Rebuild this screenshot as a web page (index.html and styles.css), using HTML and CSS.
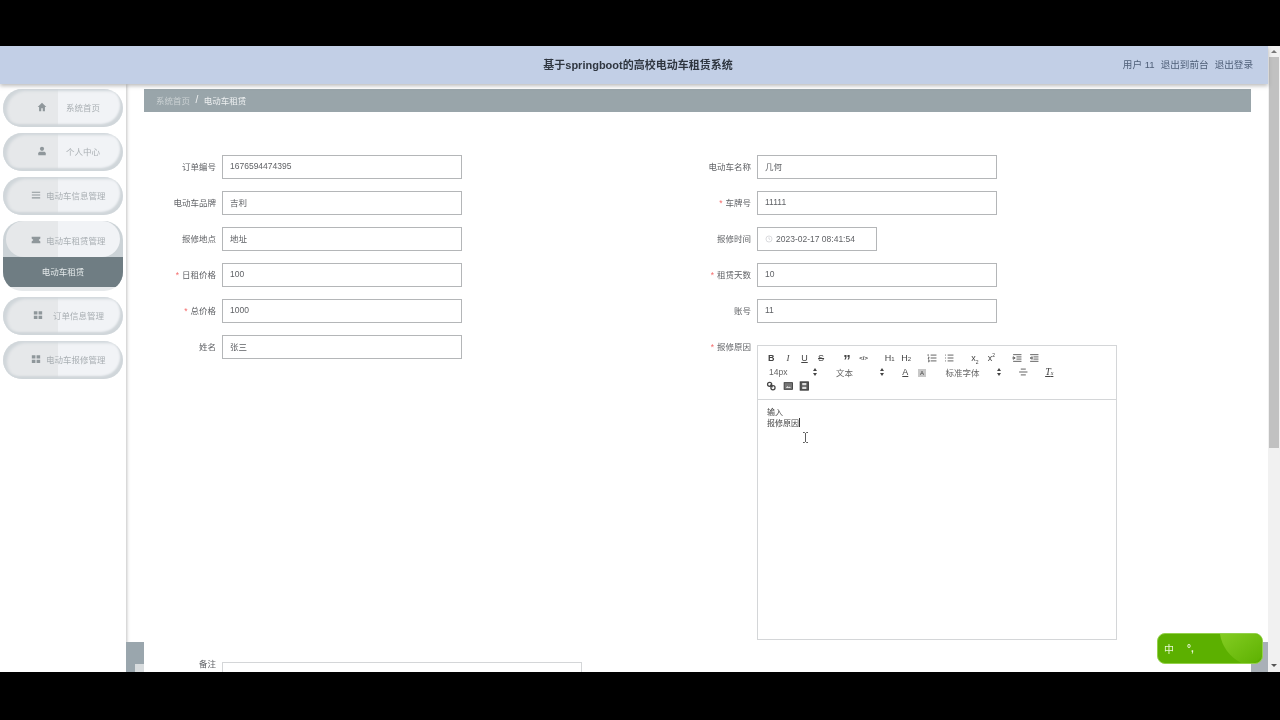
FILE: index.html
```html
<!DOCTYPE html>
<html lang="zh-CN">
<head>
  <meta charset="UTF-8">
  <meta name="viewport" content="width=device-width, initial-scale=1.0">
  <title>基于springboot的高校电动车租赁系统</title>
  <link rel="stylesheet" href="styles.css">
</head>
<body>
  <div class="screen">
    <div class="page">
      <header class="topbar">
        <div class="title">基于springboot的高校电动车租赁系统</div>
        <div class="user-links">
          <span>用户 11</span>
          <a>退出到前台</a>
          <a>退出登录</a>
        </div>
      </header>

      <div class="layout">
        <aside class="sidebar">
          <div class="pill pill-short">
            <svg class="nav-icon" viewBox="0 0 12 12"><path d="M6 1 .8 6h1.7v5h2.6V7.6h1.8V11h2.600V6h1.700z"/></svg>
            <span>系统首页</span>
          </div>
          <div class="pill pill-short">
            <svg class="nav-icon" viewBox="0 0 12 12"><circle cx="6" cy="3.400" r="2.500"/><path d="M1.500 11V8.800C1.500 7.500 2.500 6.800 3.800 6.800h4.400c1.300 0 2.300.7 2.300 2V11z"/></svg>
            <span>个人中心</span>
          </div>
          <div class="pill pill-wide">
            <svg class="nav-icon" viewBox="0 0 12 12"><path d="M1 2h10v1.300H1zM1 5.400h10v1.300H1zM1 8.800h10v1.300H1z"/></svg>
            <span>电动车信息管理</span>
          </div>
          <div class="pill-open">
            <div class="pill pill-wide pill-head">
              <svg class="nav-icon" viewBox="0 0 12 12"><path d="M.8 2h10.400v2.200l-2 1.800 2 1.800V10H.8V7.800l2-1.800-2-1.800z"/></svg>
              <span>电动车租赁管理</span>
            </div>
            <div class="submenu">电动车租赁</div>
          </div>
          <div class="pill pill-mid">
            <svg class="nav-icon" viewBox="0 0 12 12"><path d="M1 1.500h4.300v4H1zM6.700 1.500H11v4H6.700zM1 6.800h4.300v4H1zM6.700 6.800H11v4H6.700z"/></svg>
            <span>订单信息管理</span>
          </div>
          <div class="pill pill-wide">
            <svg class="nav-icon" viewBox="0 0 12 12"><path d="M1 1.500h4.300v4H1zM6.700 1.500H11v4H6.700zM1 6.800h4.300v4H1zM6.700 6.800H11v4H6.700z"/></svg>
            <span>电动车报修管理</span>
          </div>
        </aside>

        <main class="content">
          <div class="breadcrumb">
            <span class="crumb-home">系统首页</span>
            <span class="crumb-sep">/</span>
            <span class="crumb-now">电动车租赁</span>
          </div>

          <form class="form-grid">
            <div class="field"><label>订单编号</label><input class="text-input" value="1676594474395"></div>
            <div class="field"><label>电动车名称</label><input class="text-input" value="几何"></div>
            <div class="field"><label>电动车品牌</label><input class="text-input" value="吉利"></div>
            <div class="field"><label><i>*</i>车牌号</label><input class="text-input" value="11111"></div>
            <div class="field"><label>报修地点</label><input class="text-input" value="地址"></div>
            <div class="field">
              <label>报修时间</label>
              <div class="date-input">
                <svg class="clock" viewBox="0 0 10 10"><circle cx="5" cy="5" r="3.800"/><path d="M5 2.800V5l1.500.9"/></svg>
                <span>2023-02-17 08:41:54</span>
              </div>
            </div>
            <div class="field"><label><i>*</i>日租价格</label><input class="text-input" value="100"></div>
            <div class="field"><label><i>*</i>租赁天数</label><input class="text-input" value="10"></div>
            <div class="field"><label><i>*</i>总价格</label><input class="text-input" value="1000"></div>
            <div class="field"><label>账号</label><input class="text-input" value="11"></div>
            <div class="field"><label>姓名</label><input class="text-input" value="张三"></div>
            <div class="field">
              <label><i>*</i>报修原因</label>
              <div class="editor">
                <div class="toolbar">
                  <span class="group">
                    <b class="tool">B</b><em class="tool tool-i">I</em><u class="tool">U</u><s class="tool">S</s>
                  </span>
                  <span class="group">
                    <span class="tool tool-quote">”</span><span class="tool tool-code">&lt;/&gt;</span>
                  </span>
                  <span class="group">
                    <span class="tool tool-h">H<small>1</small></span><span class="tool tool-h">H<small>2</small></span>
                  </span>
                  <span class="group">
                    <svg class="tool-svg" viewBox="0 0 12 12"><path d="M4 2.500h7M4 6h7M4 9.500h7M1 1.500v2M1 5h1.200L1 7h1.200M1 8.500h1.200v2H1"/></svg>
                    <svg class="tool-svg" viewBox="0 0 12 12"><path d="M4 2.500h7M4 6h7M4 9.500h7M1 2.500h1M1 6h1M1 9.500h1"/></svg>
                  </span>
                  <span class="group">
                    <span class="tool tool-h">x<sub>2</sub></span><span class="tool tool-h">x<sup>2</sup></span>
                  </span>
                  <span class="group">
                    <svg class="tool-svg" viewBox="0 0 12 12"><path d="M1 2h10M5 4.700h6M5 7.300h6M1 10h10M1 4.500 3.500 6 1 7.500z"/></svg>
                    <svg class="tool-svg" viewBox="0 0 12 12"><path d="M1 2h10M5 4.700h6M5 7.300h6M1 10h10M3.500 4.500 1 6l2.500 1.500z"/></svg>
                  </span>
                  <span class="group picker picker-size">14px</span>
                  <span class="group picker picker-size">文本</span>
                  <span class="group">
                    <span class="tool tool-color">A</span><span class="tool tool-bg"><span>A</span></span>
                  </span>
                  <span class="group picker picker-font">标准字体</span>
                  <span class="group">
                    <svg class="tool-svg" viewBox="0 0 12 12"><path d="M3 2.500h6M1 6h10M3 9.500h6"/></svg>
                  </span>
                  <span class="group">
                    <span class="tool tool-clean">T<small>x</small></span>
                  </span>
                  <span class="group group-break">
                    <svg class="tool-svg tool-link" viewBox="0 0 12 12"><circle cx="4" cy="4" r="2.500"/><circle cx="8" cy="8" r="2.500"/><path d="M4.500 4.500l3 3"/></svg>
                    <svg class="tool-svg tool-image" viewBox="0 0 12 12"><rect x="1" y="2" width="10" height="8"/><path class="cut" d="M3 8.500 5 6l1.500 1.500L8 6.500l1 2z"/></svg>
                    <svg class="tool-svg tool-video" viewBox="0 0 12 12"><rect x="1" y="1" width="10" height="10"/><path class="cut" d="M3.500 2.500h5V5h-5zM3.500 7h5v2.500h-5z"/></svg>
                  </span>
                </div>
                <div class="editor-body">
                  <p>输入</p>
                  <p>报修原因<span class="caret"></span></p>
                  <svg class="ibeam" viewBox="0 0 7 11"><path d="M1 .5h1.500l1 1 1-1H6M1 10.500h1.500l1-1 1 1H6M3.500 1.500v8"/></svg>
                </div>
              </div>
            </div>
            <div class="field field-full">
              <label>备注</label>
              <div class="editor editor-short">
                <div class="toolbar">
                  <span class="group">
                    <b class="tool">B</b><em class="tool tool-i">I</em><u class="tool">U</u><s class="tool">S</s>
                  </span>
                  <span class="group">
                    <span class="tool tool-quote">”</span><span class="tool tool-code">&lt;/&gt;</span>
                  </span>
                  <span class="group">
                    <span class="tool tool-h">H<small>1</small></span><span class="tool tool-h">H<small>2</small></span>
                  </span>
                </div>
              </div>
            </div>
          </form>

          <div class="corner-block"></div>
          <div class="corner-block-right"></div>
        </main>
      </div>

      <div class="ime">
        <span class="ime-zh">中</span>
        <span class="ime-punct">°,</span>
        <svg class="ime-leaf" viewBox="0 0 60 31">
          <defs>
            <linearGradient id="leaf" x1="0" y1="0" x2="1" y2="1">
              <stop offset="0" stop-color="#84cc22"/>
              <stop offset="1" stop-color="#5cb000"/>
            </linearGradient>
          </defs>
          <path fill="url(#leaf)" d="M18 0h38a4 4 0 0 1 4 4v18c-5 6-9 8-16 9C30 26 20 14 18 0z"/>
        </svg>
      </div>

      <div class="scrollbar">
        <span class="arrow-up"></span>
        <div class="thumb"></div>
        <span class="arrow-down"></span>
      </div>
    </div>
  </div>
</body>
</html>
```

FILE: styles.css
```css
* {
  box-sizing: border-box;
}
html, body {
  height: 100%;
  margin: 0;
  overflow: hidden;
  background: #000;
}
body {
  font-family: "Liberation Sans", "Noto Sans CJK SC", sans-serif;
  font-size: 8.5px;
  color: #606266;
}
.screen {
  padding-top: 46px;
  height: 720px;
}
.page {
  position: relative;
  height: 626px;
  overflow: hidden;
  background: #fff;
  filter: blur(0.5px);
}

/* top bar */
.topbar {
  position: relative;
  z-index: 2;
  width: 1268px;
  height: 38px;
  padding: 0 15px 2px 0;
  display: flex;
  align-items: center;
  justify-content: flex-end;
  background: #c2cfe6;
  box-shadow: 0 2px 4px rgba(90, 90, 90, 0.4);
}
.title {
  position: absolute;
  left: 0;
  right: 0;
  text-align: center;
  font-size: 11px;
  font-weight: bold;
  color: #2f3640;
  text-indent: 8px;
}
.user-links {
  position: relative;
  display: flex;
  gap: 6px;
  font-size: 9.6px;
  color: #4f5f78;
}

/* sidebar */
.layout {
  display: flex;
  height: 588px;
  width: 1268px;
}
.sidebar {
  width: 126px;
  flex: none;
  padding: 5px 3px 0;
  background: #fff;
  box-shadow: 1px 0 3px rgba(120, 120, 120, 0.45);
}
.pill {
  width: 120px;
  height: 38px;
  margin-bottom: 6px;
  padding-bottom: 2px;
  display: flex;
  align-items: center;
  border-radius: 19px;
  color: #a9afb3;
  font-size: 8.5px;
  background: linear-gradient(90deg, #e6e8ea 0, #e6e8ea 46%, #f1f3f6 46%, #f1f3f6 100%);
  box-shadow: inset 4px 2px 3px #d0d6da, inset -3px -3px 2px #d0d6da;
}
.pill-short {
  padding-left: 34px;
}
.pill-short .nav-icon {
  margin-right: 19px;
}
.pill-wide {
  padding-left: 28px;
}
.pill-wide .nav-icon {
  margin-right: 5px;
}
.pill-mid {
  padding-left: 30px;
}
.pill-mid .nav-icon {
  margin-right: 10px;
}
.nav-icon {
  width: 10px;
  height: 10px;
  flex: none;
  fill: #8f979b;
}
.pill-open {
  width: 120px;
  height: 70px;
  margin: 1px 0 6px;
  border-radius: 19px;
  background: linear-gradient(#ccd3d7 0, #ccd3d7 66px, #e6e9eb 66px);
  overflow: hidden;
}
.pill-head {
  width: 114px;
  margin: 0 3px;
  height: 36px;
  padding: 1px 0 0 25px;
  border-radius: 18px;
  box-shadow: none;
}
.submenu {
  height: 30px;
  line-height: 30px;
  text-align: center;
  color: #e4e9ea;
  background: #6f7d83;
}

/* main area */
.content {
  position: relative;
  flex: 1;
  padding: 5px 17px 0 18px;
  overflow: hidden;
}
.breadcrumb {
  height: 23px;
  padding: 0 0 2px 12px;
  display: flex;
  align-items: center;
  background: #99a5aa;
  font-size: 8.5px;
}
.crumb-home {
  color: #cbd1d3;
}
.crumb-sep {
  margin: 0 5.500px;
  font-size: 10px;
  color: #eef0f1;
}
.crumb-now {
  color: #eef0f1;
}
.form-grid {
  display: grid;
  grid-template-columns: 535px 1fr;
  row-gap: 12px;
  padding-top: 43px;
}
.field {
  display: flex;
  align-items: flex-start;
}
.field-full {
  grid-column: 1 / 3;
}
.field label {
  width: 72px;
  height: 24px;
  line-height: 24px;
  margin-right: 6px;
  text-align: right;
  flex: none;
  color: #606266;
}
.field label i {
  margin-right: 3px;
  font-style: normal;
  color: #f56c6c;
}
.text-input, .date-input {
  height: 24px;
  border: 1px solid #b4b6b8;
  background: #fff;
  font-family: inherit;
  font-size: 8.5px;
  color: #606266;
}
.text-input {
  width: 240px;
  padding: 0 7px 2px;
  outline: none;
}
.date-input {
  width: 120px;
  display: flex;
  align-items: center;
  padding-left: 7px;
}
.clock {
  width: 8px;
  height: 8px;
  margin-right: 3px;
  fill: none;
  stroke: #c6c8cc;
  stroke-width: 0.8;
}

/* rich text editor */
.editor {
  width: 360px;
  height: 295px;
  margin-top: 10px;
  border: 1px solid #d4d6d8;
  background: #fff;
}
.editor-short {
  height: 60px;
}
.toolbar {
  height: 54px;
  padding: 5px 5px 0;
  display: flex;
  flex-wrap: wrap;
  align-content: flex-start;
  border-bottom: 1px solid #d4d6d8;
  color: #444;
}
.group {
  display: flex;
  height: 14px;
  align-items: center;
  margin-right: 9.4px;
}
.group-break {
  margin-right: 100px;
}
.tool, .tool-svg {
  width: 16.6px;
  height: 14px;
  flex: none;
}
.tool {
  display: block;
  line-height: 14px;
  text-align: center;
  font-size: 9px;
  font-style: normal;
  color: #444;
}
.tool-i {
  font-style: italic;
  font-family: "Liberation Serif", serif;
}
.tool-quote {
  font-size: 15px;
  font-weight: bold;
  line-height: 18px;
}
.tool-code {
  font-size: 6px;
  font-weight: bold;
}
.tool-h {
  font-size: 9px;
}
.tool-h small {
  font-size: 6px;
}
.tool sub, .tool sup {
  font-size: 5px;
  line-height: 0;
}
.tool-svg {
  padding: 2px 3px;
  fill: none;
  stroke: #444;
  stroke-width: 1;
}
.tool-link {
  stroke-width: 1.5;
}
.tool-image {
  fill: #777;
  stroke: #333;
}
.tool-video {
  fill: #555;
  stroke: #333;
}
.tool-svg .cut {
  fill: #ddd;
  stroke: none;
}
.tool-color {
  text-decoration: underline;
}
.tool-bg span {
  display: inline-block;
  width: 8px;
  height: 8px;
  line-height: 8px;
  font-size: 6px;
  background: #c8c8c8;
}
.tool-clean {
  font-style: italic;
  font-family: "Liberation Serif", serif;
  font-size: 10px;
  text-decoration: underline;
}
.tool-clean small {
  font-size: 6px;
}
.picker {
  position: relative;
  padding-left: 6px;
  color: #666;
  font-size: 8.5px;
}
.picker::before, .picker::after {
  content: "";
  position: absolute;
  right: 5px;
  width: 0;
  height: 0;
  border-left: 2px solid transparent;
  border-right: 2px solid transparent;
}
.picker::before {
  top: 3px;
  border-bottom: 3px solid #444;
}
.picker::after {
  top: 8px;
  border-top: 3px solid #444;
}
.picker-size {
  width: 59px;
  margin-right: 8px;
}
.picker-font {
  width: 66px;
}
.editor-body {
  position: relative;
  padding: 7px 9px;
  font-size: 8px;
  line-height: 11px;
  color: #444;
}
.editor-body p {
  margin: 0;
}
.caret {
  display: inline-block;
  width: 1px;
  height: 9px;
  vertical-align: -1px;
  background: #333;
}
.ibeam {
  position: absolute;
  left: 44px;
  top: 32px;
  width: 7px;
  height: 11px;
  fill: none;
  stroke: #333;
  stroke-width: 0.8;
}

/* blocks left over at the bottom corners */
.corner-block {
  position: absolute;
  left: 0;
  bottom: 0;
  width: 18px;
  height: 30px;
  background: linear-gradient(#9aa6ad 0, #9aa6ad 22px, transparent 22px), linear-gradient(90deg, #9aa6ad 50%, #d8dcde 50%);
}
.corner-block-right {
  position: absolute;
  right: 0;
  bottom: 0;
  width: 17px;
  height: 30px;
  background: #a9b0b7;
}

/* floating input method widget */
.ime {
  position: absolute;
  left: 1157px;
  top: 587px;
  width: 106px;
  height: 31px;
  z-index: 3;
  display: flex;
  align-items: center;
  padding-left: 6px;
  border: 1px solid #93d14a;
  border-radius: 8px;
  overflow: hidden;
  background: #5cb000;
  color: #e9f7d6;
  font-size: 10px;
}
.ime-punct {
  margin-left: 13px;
  font-size: 10px;
  font-weight: bold;
}
.ime-leaf {
  position: absolute;
  right: 0;
  top: 0;
  width: 60px;
  height: 31px;
}

/* page scrollbar */
.scrollbar {
  position: absolute;
  right: 0;
  top: 0;
  width: 12px;
  height: 626px;
  background: #f1f1f1;
}
.thumb {
  position: absolute;
  top: 11px;
  left: 1px;
  width: 10px;
  height: 391px;
  background: #c1c1c1;
}
.arrow-up, .arrow-down {
  position: absolute;
  left: 3px;
  width: 0;
  height: 0;
  border-left: 3px solid transparent;
  border-right: 3px solid transparent;
}
.arrow-up {
  top: 4px;
  border-bottom: 3px solid #777;
}
.arrow-down {
  bottom: 5px;
  border-top: 3px solid #555;
}
```
